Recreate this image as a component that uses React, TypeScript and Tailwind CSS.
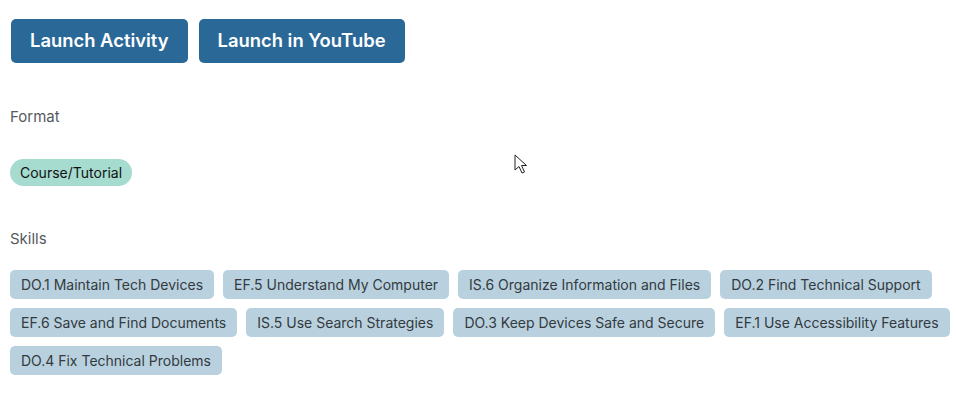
import React from "react";

const skills = [
  "DO.1 Maintain Tech Devices",
  "EF.5 Understand My Computer",
  "IS.6 Organize Information and Files",
  "DO.2 Find Technical Support",
  "EF.6 Save and Find Documents",
  "IS.5 Use Search Strategies",
  "DO.3 Keep Devices Safe and Secure",
  "EF.1 Use Accessibility Features",
  "DO.4 Fix Technical Problems",
];

export default function App() {
  return (
    <div
      className="relative w-[956px] h-[407px] bg-white pl-[10px] pt-[19px]"
      style={{ fontFamily: "Inter, 'Liberation Sans', sans-serif" }}
    >
      <div className="flex gap-[11px] pl-px">
        <button className="h-[44px] px-[19px] rounded-[5px] bg-[#2a6997] text-white text-[18.4px] font-semibold">
          Launch Activity
        </button>
        <button className="h-[44px] px-[19px] rounded-[5px] bg-[#2a6997] text-white text-[18.4px] font-semibold">
          Launch in YouTube
        </button>
      </div>
      <div className="mt-[43px] text-[15px] leading-[22px] text-[#555a5e]">Format</div>
      <div className="mt-[31px] flex">
        <span className="h-[27px] px-[10px] rounded-full bg-[#a6dbd0] text-[14px] leading-[27px] text-[#111]">
          Course/Tutorial
        </span>
      </div>
      <div className="mt-[42px] text-[15px] leading-[22px] text-[#555a5e]">Skills</div>
      <div className="mt-[20px] flex flex-wrap gap-x-[9px] gap-y-[9px] w-[945px]">
        {skills.map((s) => (
          <span
            key={s}
            className="h-[29px] px-[11px] rounded-[5px] bg-[#b9d1df] text-[14px] leading-[29px] text-[#333a40]"
          >
            {s}
          </span>
        ))}
      </div>
      <svg
        className="absolute left-[514px] top-[154px]"
        width="16"
        height="22"
        viewBox="0 0 16 22"
      >
        <path
          d="M1 1 L1 16 L5 12.5 L8 19 L10.5 18 L7.5 11.5 L12.5 11.5 Z"
          fill="white"
          stroke="#222"
          strokeWidth="1"
          strokeLinejoin="round"
        />
      </svg>
    </div>
  );
}
